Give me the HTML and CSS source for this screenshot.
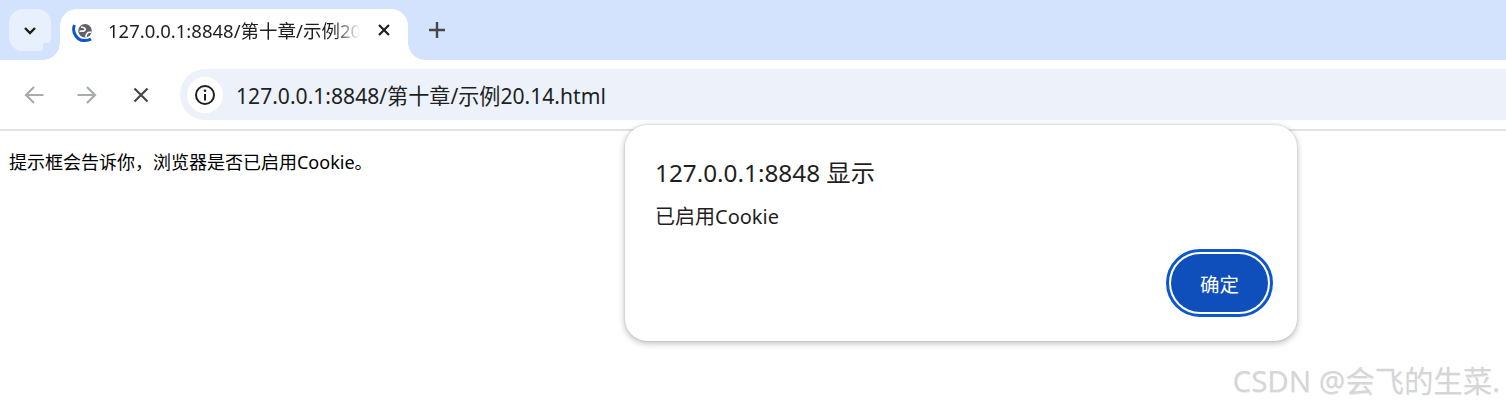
FILE: index.html
```html
<!DOCTYPE html>
<html lang="zh-CN">
<head>
    <meta charset="UTF-8">
    <title>127.0.0.1:8848/第十章/示例20.14.html</title>
    <link rel="stylesheet" href="styles.css">
</head>
<body>
    <div class="tabstrip">
        <button class="tab-search">
            <svg width="14" height="10" viewBox="0 0 14 10"><path d="M2 2l5 5 5-5" fill="none" stroke="#1f1f1f" stroke-width="2.400"/></svg>
        </button>
        <div class="tab">
            <svg class="favicon" width="24" height="24" viewBox="0 0 24 24">
                <path d="M3.500 7C.5 14 6 23 14 22.500c2.500 0 4.500-.5 6-1.500" fill="none" stroke="#0b57d0" stroke-width="3"/>
                <circle cx="14" cy="12.700" r="6.800" fill="#5f6368"/>
                <path d="M10 9c2 0 3 .5 4 1.500s-.5 2-1.500 2.500-2-.5-4 .5M15 19c0-2 .5-3 1.500-4s2-.5 4-1" fill="none" stroke="#fff" stroke-width="1.600"/>
            </svg>
            <span class="tab-title">127.0.0.1:8848/第十章/示例20</span>
            <svg class="tab-close" width="14" height="14" viewBox="0 0 14 14"><path d="M2 2l10 10M12 2L2 12" fill="none" stroke="#1f1f1f" stroke-width="2.200"/></svg>
        </div>
        <svg class="new-tab" width="18" height="18" viewBox="0 0 18 18"><path d="M9 1v16M1 9h16" fill="none" stroke="#474747" stroke-width="2.400"/></svg>
    </div>

    <div class="toolbar">
        <div class="nav-buttons">
            <svg width="20" height="20" viewBox="0 0 20 20"><path d="M19.500 10H2M10 2l-8 8 8 8" fill="none" stroke="#a8abaf" stroke-width="2.200"/></svg>
            <svg width="20" height="20" viewBox="0 0 20 20"><path d="M.5 10H18M10 2l8 8-8 8" fill="none" stroke="#a8abaf" stroke-width="2.200"/></svg>
            <svg class="stop" width="16" height="16" viewBox="0 0 16 16"><path d="M1.500 1.500l13 13M14.500 1.500l-13 13" fill="none" stroke="#474747" stroke-width="2.200"/></svg>
        </div>
        <div class="omnibox">
            <span class="site-info">
                <svg width="22" height="22" viewBox="0 0 22 22">
                    <circle cx="11" cy="11" r="9" fill="none" stroke="#1f1f1f" stroke-width="2"/>
                    <path d="M11 10v6.500" stroke="#1f1f1f" stroke-width="2"/>
                    <circle cx="11" cy="6.800" r="1.300" fill="#1f1f1f"/>
                </svg>
            </span>
            <span class="url">127.0.0.1:8848/第十章/示例20.14.html</span>
        </div>
    </div>

    <p class="page-text">提示框会告诉你，浏览器是否已启用Cookie。</p>

    <div class="dialog">
        <div class="dialog-title">127.0.0.1:8848 显示</div>
        <div class="dialog-message">已启用Cookie</div>
        <div class="dialog-buttons">
            <button class="ok-button">确定</button>
        </div>
    </div>

    <div class="watermark">CSDN @会飞的生菜.</div>
</body>
</html>
```

FILE: styles.css
```css
body {
    margin: 0;
    height: 408px;
    overflow: hidden;
    background-color: #fff;
    font-family: "Noto Sans", "Noto Sans CJK SC", sans-serif;
    color: #1f1f1f;
}
svg {
    display: block;
    flex: none;
}
.tabstrip {
    display: flex;
    align-items: flex-end;
    height: 60px;
    background-color: #d3e3fd;
}
.tab-search {
    align-self: flex-start;
    display: flex;
    align-items: center;
    justify-content: center;
    width: 42px;
    height: 42px;
    margin: 9px 9px 0 9px;
    padding: 1px 0 0;
    border: none;
    border-radius: 14px;
    background-color: #e8f0fe;
}
.tab {
    position: relative;
    display: flex;
    align-items: center;
    width: 348px;
    height: 51px;
    box-sizing: border-box;
    padding: 0 17px 9px 11px;
    border-radius: 17px 17px 0 0;
    background-color: #fff;
}
.tab::before,
.tab::after {
    content: "";
    position: absolute;
    bottom: 0;
    width: 17px;
    height: 17px;
}
.tab::before {
    left: -17px;
    background: radial-gradient(circle at 0 0, #d3e3fd 16.500px, #fff 17px);
}
.tab::after {
    right: -17px;
    background: radial-gradient(circle at 100% 0, #d3e3fd 16.500px, #fff 17px);
}
.tab-title {
    flex: 1;
    margin-left: 13px;
    overflow: hidden;
    white-space: nowrap;
    font-size: 18.500px;
    -webkit-mask-image: linear-gradient(to right, #000 225px, transparent 252px);
    mask-image: linear-gradient(to right, #000 225px, transparent 252px);
}
.tab-close {
    margin-left: 10px;
}
.new-tab {
    align-self: center;
    margin: 0 0 0 20px;
}
.toolbar {
    display: flex;
    align-items: center;
    height: 69px;
    border-bottom: 2px solid #e3e3e3;
    border-radius: 17px 0 0 0;
    background-color: #fff;
}
.nav-buttons {
    display: flex;
    align-items: center;
    width: 180px;
    padding-left: 24px;
    box-sizing: border-box;
}
.nav-buttons svg {
    margin-right: 33px;
}
.nav-buttons .stop {
    margin-left: 3px;
    margin-right: 0;
}
.omnibox {
    flex: 1;
    display: flex;
    align-items: center;
    height: 51px;
    padding-left: 7px;
    border-radius: 25px 0 0 25px;
    background-color: #edf2fa;
}
.site-info {
    display: flex;
    align-items: center;
    justify-content: center;
    width: 36px;
    height: 36px;
    border-radius: 50%;
    background-color: #fff;
}
.url {
    margin-left: 13px;
    font-size: 21.100px;
    white-space: nowrap;
}
.page-text {
    margin: 0;
    padding: 19px 9px 0;
    font-size: 18px;
    line-height: 24px;
    color: #000;
}
.dialog {
    position: absolute;
    left: 625px;
    top: 125px;
    width: 672px;
    height: 216px;
    box-sizing: border-box;
    padding: 31px 29px 0 30px;
    border-radius: 22px;
    background-color: #fff;
    box-shadow: 0 2px 7px rgba(0, 0, 0, 0.28), 0 0 2px rgba(0, 0, 0, 0.18);
}
.dialog-title {
    font-size: 24.300px;
    line-height: 34px;
}
.dialog-message {
    margin-top: 13px;
    font-size: 20px;
    line-height: 28px;
}
.dialog-buttons {
    display: flex;
    justify-content: flex-end;
    margin-top: 23px;
}
.ok-button {
    width: 97px;
    height: 58px;
    padding: 0;
    border: none;
    border-radius: 29px;
    background-color: #0e4fbb;
    color: #fff;
    font-family: inherit;
    font-size: 19.500px;
    outline: 3px solid #0b57d0;
    outline-offset: 2px;
}
.watermark {
    position: absolute;
    right: 6px;
    top: 360px;
    font-size: 29.400px;
    line-height: 42px;
    white-space: nowrap;
    color: #d6d6d6;
    text-shadow: 0.5px 0.5px 0.5px rgba(0, 0, 0, 0.08);
}
```
